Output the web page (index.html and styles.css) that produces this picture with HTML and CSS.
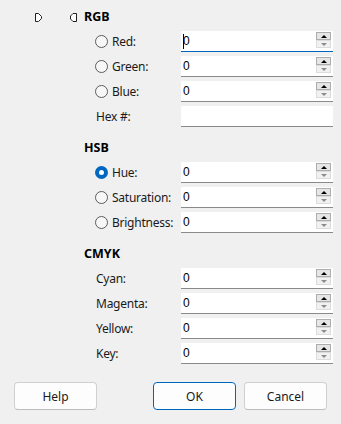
FILE: index.html
```html
<!DOCTYPE html>
<html>
<head>
<meta charset="utf-8">
<link rel="stylesheet" href="styles.css">
</head>
<body>
<div class="dialog">
  <div class="top">
    <svg class="mark m1" viewBox="0 0 7 9"><path d="M0.5 0.5 H3.5 L6.5 3.5 V5.5 L3.5 8.5 H0.5 Z" fill="#fff" stroke="#202020" stroke-width="1"/></svg>
    <svg class="mark m2" viewBox="0 0 7 9"><path d="M6.5 0.5 H3 L0.5 3 V6 L3 8.5 H6.5 Z" fill="#fff" stroke="#202020" stroke-width="1"/></svg>
    <div class="heading">RGB</div>
  </div>
  <div class="rows">
    <div class="row"><div class="lab"><span class="radio"></span>Red:</div><div class="field focus"><span class="caret"></span><span class="val">0</span><div class="spin"><span class="up"></span><span class="down"></span></div></div></div>
    <div class="row"><div class="lab"><span class="radio"></span>Green:</div><div class="field"><span class="val">0</span><div class="spin"><span class="up"></span><span class="down"></span></div></div></div>
    <div class="row"><div class="lab"><span class="radio"></span>Blue:</div><div class="field"><span class="val">0</span><div class="spin"><span class="up"></span><span class="down"></span></div></div></div>
    <div class="row"><div class="lab">Hex #:</div><div class="field"><span class="val"></span></div></div>
  </div>

  <div class="heading sec">HSB</div>
  <div class="rows">
    <div class="row"><div class="lab"><span class="radio on"></span>Hue:</div><div class="field"><span class="val">0</span><div class="spin"><span class="up"></span><span class="down"></span></div></div></div>
    <div class="row"><div class="lab"><span class="radio"></span>Saturation:</div><div class="field"><span class="val">0</span><div class="spin"><span class="up"></span><span class="down"></span></div></div></div>
    <div class="row"><div class="lab"><span class="radio"></span>Brightness:</div><div class="field"><span class="val">0</span><div class="spin"><span class="up"></span><span class="down"></span></div></div></div>
  </div>

  <div class="heading sec">CMYK</div>
  <div class="rows">
    <div class="row"><div class="lab">Cyan:</div><div class="field"><span class="val">0</span><div class="spin"><span class="up"></span><span class="down"></span></div></div></div>
    <div class="row"><div class="lab">Magenta:</div><div class="field"><span class="val">0</span><div class="spin"><span class="up"></span><span class="down"></span></div></div></div>
    <div class="row"><div class="lab">Yellow:</div><div class="field"><span class="val">0</span><div class="spin"><span class="up"></span><span class="down"></span></div></div></div>
    <div class="row"><div class="lab">Key:</div><div class="field"><span class="val">0</span><div class="spin"><span class="up"></span><span class="down"></span></div></div></div>
  </div>

  <div class="buttons">
    <button class="btn">Help</button>
    <button class="btn ok">OK</button>
    <button class="btn">Cancel</button>
  </div>
</div>
</body>
</html>
```
FILE: styles.css
```css
html, body {
  margin: 0;
  padding: 0;
}
body {
  background: #f0f0f0;
  font-family: "Noto Sans", "Open Sans", sans-serif;
  font-size: 12px;
  color: #000;
  width: 341px;
  height: 424px;
  overflow: hidden;
}
.dialog {
  display: flex;
  flex-direction: column;
}
.top {
  display: flex;
  align-items: center;
  height: 16px;
  margin-top: 9px;
  padding-left: 35px;
}
.mark {
  width: 7px;
  height: 9px;
  display: block;
}
.m1 { margin-right: 28px; }
.m2 { margin-right: 7px; }
.heading {
  font-weight: bold;
  line-height: 16px;
  height: 16px;
  font-size: 12.5px;
}
.sec {
  margin-top: 13px;
  padding-left: 84px;
}
.rows {
  display: flex;
  flex-direction: column;
  gap: 4px;
  margin-top: 6px;
  padding-left: 95px;
}
.row {
  display: flex;
  align-items: center;
  height: 21px;
}
.lab {
  width: 86px;
  display: flex;
  align-items: center;
  line-height: 16px;
  color: #1a1a1a;
  letter-spacing: -0.25px;
}
.lab:not(:has(.radio)) {
  padding-left: 1px;
  box-sizing: border-box;
}
.radio {
  width: 13px;
  height: 13px;
  box-sizing: border-box;
  border: 1px solid #5c5c5c;
  border-radius: 50%;
  background: #f7f7f7;
  margin-right: 4px;
  flex: none;
}
.radio.on {
  border: 4px solid #0067c0;
  background: #fff;
}
.field {
  width: 152px;
  height: 21px;
  box-sizing: border-box;
  background: #fff;
  border-bottom: 1px solid #8a8a8a;
  display: flex;
  align-items: center;
  padding-left: 2px;
  font-family: "Liberation Sans", Arial, sans-serif;
  font-size: 12px;
}
.field.focus {
  border-bottom-color: #0067c0;
}
.caret {
  width: 1px;
  height: 15px;
  background: #000;
  margin-right: -1px;
}
.val {
  flex: 1;
}
.spin {
  align-self: flex-start;
  margin-top: 1px;
  margin-right: 2px;
  display: flex;
  flex-direction: column;
}
.up, .down {
  width: 15px;
  height: 8px;
  box-sizing: border-box;
  display: flex;
  justify-content: center;
  align-items: center;
}
.up {
  border: 1px solid #adadad;
  background: #e6e6e6;
}
.down {
  border: 1px solid #dcdcdc;
  background: #f1f1f1;
}
.up::after {
  content: "";
  border-left: 3px solid transparent;
  border-right: 3px solid transparent;
  border-bottom: 3px solid #000;
}
.down::after {
  content: "";
  border-left: 3px solid transparent;
  border-right: 3px solid transparent;
  border-top: 3px solid #8c8c8c;
}
.buttons {
  display: flex;
  gap: 8px;
  padding: 0 14px;
  margin-top: 18px;
}
.btn {
  width: 83px;
  height: 28px;
  box-sizing: border-box;
  border: 1px solid #d0d0d0;
  border-bottom-color: #bdbdbd;
  border-radius: 4px;
  background: #fdfdfd;
  font-family: "Noto Sans", "Open Sans", sans-serif;
  font-size: 12px;
  color: #1a1a1a;
  padding: 0;
}
.ok {
  margin-left: auto;
  border: 1px solid #0067c0;
}
```
